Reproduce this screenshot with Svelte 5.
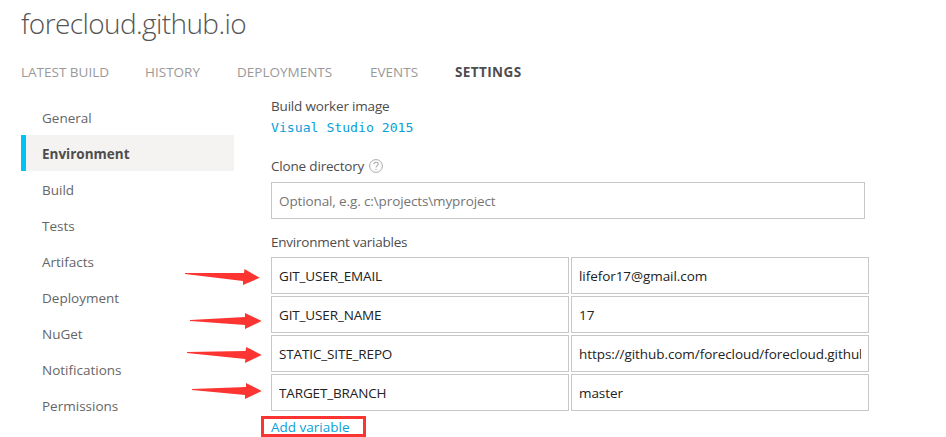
<script>
  const tabs = [
    { label: 'LATEST BUILD', width: 88 },
    { label: 'HISTORY', width: 56 },
    { label: 'DEPLOYMENTS', width: 97 },
    { label: 'EVENTS', width: 49 },
    { label: 'SETTINGS', width: 68, active: true }
  ];
  const sections = [
    'General', 'Environment', 'Build', 'Tests', 'Artifacts',
    'Deployment', 'NuGet', 'Notifications', 'Permissions'
  ];
  const variables = [
    ['GIT_USER_EMAIL', 'lifefor17@gmail.com'],
    ['GIT_USER_NAME', '17'],
    ['STATIC_SITE_REPO', 'https://github.com/forecloud/forecloud.github.io.git'],
    ['TARGET_BRANCH', 'master']
  ];
  const arrows = [
    '185,273 185,274 243,281 243,285 259.7,277.8 244.5,269 244,273',
    '190,320 190,321 245,325 245,329 261.7,321 245,313 245,317',
    '187,352 187,353 245.3,359 245,363 261.7,355 246.3,347 245.5,351',
    '192,389 192,390 245,395 245,399 261.7,391 246,383 246,387'
  ];
</script>

<div class="page">
  <h1>forecloud.github.io</h1>
  <nav class="tabs">
    {#each tabs as tab}
      <span class="tab" class:active={tab.active} style:width="{tab.width}px">{tab.label}</span>
    {/each}
  </nav>
  <div class="columns">
    <ul class="side">
      {#each sections as s}
        <li class:current={s === 'Environment'}>{s}</li>
      {/each}
    </ul>
    <main>
      <div class="label">Build worker image</div>
      <div class="image">Visual Studio 2015</div>
      <div class="label clone">
        <span>Clone directory</span>
        <svg width="14" height="14" viewBox="0 0 14 14" fill="none" stroke="#aaa">
          <circle cx="7" cy="7" r="6.4" />
          <path d="M4.8 5.3C4.8 3.9 5.7 3.2 7 3.2s2.2.8 2.2 1.9C9.2 6.6 7 6.7 7 8.6M7 9.8v1.3" stroke-width="1.1" />
        </svg>
      </div>
      <div class="field wide hint">Optional, e.g. c:\projects\myproject</div>
      <div class="label vars">Environment variables</div>
      {#each variables as [name, value]}
        <div class="row">
          <div class="field name"><span>{name}</span></div>
          <div class="field"><span>{value}</span></div>
        </div>
      {/each}
      <a class="add" href="#add">Add variable</a>
    </main>
  </div>
  <svg class="arrows" width="946" height="437">
    {#each arrows as points}
      <polygon {points} />
    {/each}
  </svg>
</div>

<style>
  :global(body) { background: #fff; }
  .page {
    position: relative;
    box-sizing: border-box;
    width: 946px;
    height: 437px;
    overflow: hidden;
    padding: 3px 0 0 21px;
    font: 13.5px/20px "Open Sans", "Noto Sans", sans-serif;
    color: #4d4d4d;
    white-space: nowrap;
  }
  h1 { margin: 0; font-size: 28px; line-height: 40px; font-weight: 300; letter-spacing: -0.6px; color: #555; }
  .tabs { display: flex; gap: 36px; margin-top: 19px; color: #999; font-size: 13.5px; }
  .active { color: #4d4d4d; font-weight: 700; letter-spacing: 0.4px; }
  .columns { display: flex; gap: 37px; margin-top: 14px; }
  .side { list-style: none; width: 213px; margin: 3px 0 0; padding: 0; line-height: 38px; color: #666; }
  .side li { box-sizing: border-box; height: 36px; padding-left: 21px; }
  .side .current { padding-left: 16px; border-left: 5px solid #00c3f3; background: #f4f3f1; color: #4d4d4d; font-weight: 700; }
  main { width: 598px; }
  .label { height: 20px; letter-spacing: -0.18px; }
  .image { height: 20px; margin-top: 2px; font: 13.15px/20px "DejaVu Sans Mono", monospace; color: #0a9fd8; }
  .clone { display: flex; align-items: center; gap: 5px; margin-top: 18px; }
  .field {
    box-sizing: border-box;
    width: 298px;
    height: 37px;
    padding: 0 7px;
    border: 1px solid #c8c8c8;
    line-height: 37px;
    letter-spacing: -0.07px;
    color: #222;
  }
  .field span { display: block; height: 35px; overflow: hidden; }
  .name { letter-spacing: -0.14px; }
  .wide { width: 594px; margin-top: 6px; }
  .hint { color: #757575; letter-spacing: -0.12px; }
  .vars { margin-top: 13px; margin-bottom: 5px; letter-spacing: -0.22px; }
  .row { display: flex; gap: 2px; margin-bottom: 2px; }
  .add {
    display: block;
    box-sizing: border-box;
    width: 105px;
    height: 21px;
    margin: 5px 0 0 -10px;
    padding-left: 7px;
    border: 3px solid #fc3532;
    line-height: 16px;
    color: #0a9fd8;
    text-decoration: none;
  }
  .arrows { position: absolute; left: 0; top: 0; fill: #fc3532; pointer-events: none; }
</style>
